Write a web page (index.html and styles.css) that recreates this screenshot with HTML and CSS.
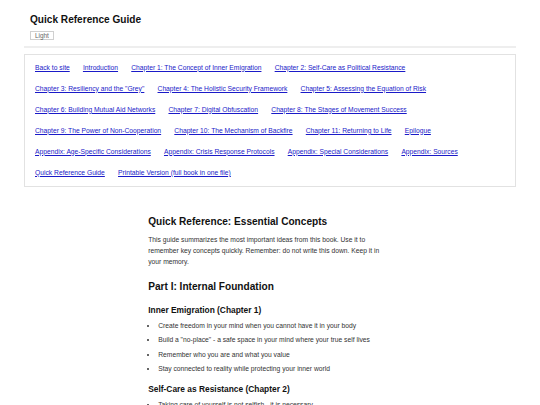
FILE: index.html
```html
<!DOCTYPE html>
<html lang="en">
<head>
<meta charset="utf-8">
<title>Quick Reference Guide</title>
<link rel="stylesheet" href="styles.css">
</head>
<body>
<div class="page">
  <header class="site-header">
    <h1 class="site-title">Quick Reference Guide</h1>
    <button class="theme-btn" type="button">Light</button>
  </header>
  <nav class="toc">
    <a href="#">Back to site</a>
    <a href="#">Introduction</a>
    <a href="#">Chapter 1: The Concept of Inner Emigration</a>
    <a href="#">Chapter 2: Self-Care as Political Resistance</a>
    <a href="#">Chapter 3: Resiliency and the "Grey"</a>
    <a href="#">Chapter 4: The Holistic Security Framework</a>
    <a href="#">Chapter 5: Assessing the Equation of Risk</a>
    <a href="#">Chapter 6: Building Mutual Aid Networks</a>
    <a href="#">Chapter 7: Digital Obfuscation</a>
    <a href="#">Chapter 8: The Stages of Movement Success</a>
    <a href="#">Chapter 9: The Power of Non-Cooperation</a>
    <a href="#">Chapter 10: The Mechanism of Backfire</a>
    <a href="#">Chapter 11: Returning to Life</a>
    <a href="#">Epilogue</a>
    <a href="#">Appendix: Age-Specific Considerations</a>
    <a href="#">Appendix: Crisis Response Protocols</a>
    <a href="#">Appendix: Special Considerations</a>
    <a href="#">Appendix: Sources</a>
    <a href="#">Quick Reference Guide</a>
    <a href="#">Printable Version (full book in one file)</a>
  </nav>
  <main class="content">
    <h1 class="h1">Quick Reference: Essential Concepts</h1>
    <p class="intro">This guide summarizes the most important ideas from this book. Use it to remember key concepts quickly. Remember: do not write this down. Keep it in your memory.</p>
    <h2 class="h2">Part I: Internal Foundation</h2>
    <h3 class="h3">Inner Emigration (Chapter 1)</h3>
    <ul class="list">
      <li>Create freedom in your mind when you cannot have it in your body</li>
      <li>Build a "no-place" - a safe space in your mind where your true self lives</li>
      <li>Remember who you are and what you value</li>
      <li>Stay connected to reality while protecting your inner world</li>
    </ul>
    <h3 class="h3">Self-Care as Resistance (Chapter 2)</h3>
    <ul class="list">
      <li>Taking care of yourself is not selfish - it is necessary</li>
      <li>Rest is a form of resistance</li>
    </ul>
  </main>
</div>
</body>
</html>
```
FILE: styles.css
```css
html, body {
  margin: 0;
  padding: 0;
  background: #ffffff;
}
body {
  font-family: "Liberation Sans", Arial, sans-serif;
  font-size: 6.72px;
  line-height: 1.6;
  color: #333333;
}
.page {
  padding: 0 24px;
}
.site-header {
  padding: 13.5px 6px 6.5px;
  border-bottom: 2px solid #eeeeee;
}
.site-title {
  margin: 0;
  font-size: 10.1px;
  line-height: 12px;
  font-weight: bold;
  color: #111111;
}
.theme-btn {
  display: block;
  margin-top: 5px;
  padding: 0 4px;
  height: 9px;
  font-family: "Liberation Sans", Arial, sans-serif;
  font-size: 6.4px;
  line-height: 7px;
  color: #666666;
  background: #ffffff;
  border: 1px solid #d0d0d0;
  border-radius: 0;
}
.toc {
  margin-top: 6px;
  border: 1px solid #e2e2e2;
  padding: 7.6px 10px;
  display: flex;
  flex-wrap: wrap;
  column-gap: 13.2px;
  row-gap: 10.25px;
}
.toc a {
  color: #1a1ac8;
  text-decoration: underline;
  line-height: 10.75px;
}
.content {
  max-width: 243.6px;
  margin: 0 auto;
  padding-top: 28.8px;
}
.h1 {
  margin: 0 0 7.2px;
  font-size: 10.1px;
  line-height: 12.1px;
  font-weight: bold;
  color: #111111;
}
.intro {
  margin: 0 0 14px;
  line-height: 10.75px;
}
.h2 {
  margin: 0 0 12px;
  font-size: 10.1px;
  line-height: 12.1px;
  font-weight: bold;
  color: #111111;
}
.h3 {
  margin: 0 0 5.6px;
  font-size: 8.4px;
  line-height: 10.1px;
  font-weight: bold;
  color: #111111;
}
.list {
  margin: 0 0 9.5px;
  padding-left: 10px;
}
.list li {
  line-height: 10.75px;
  margin-bottom: 3.6px;
}
```
